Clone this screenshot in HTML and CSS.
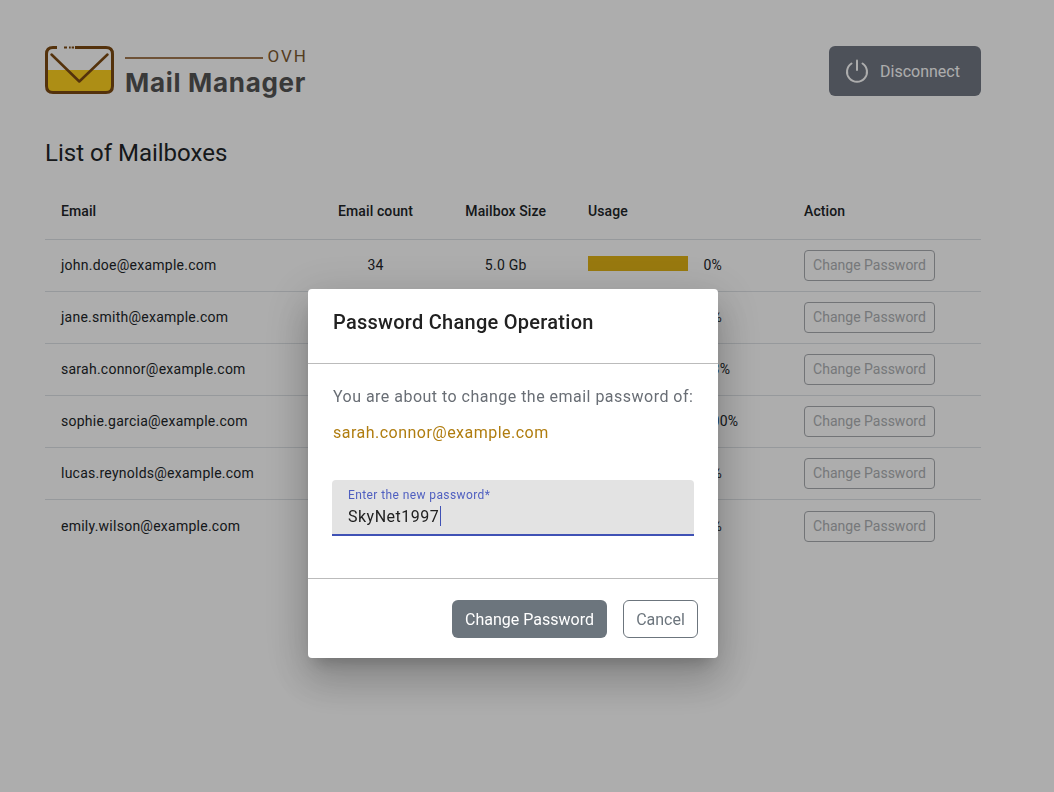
FILE: index.html
```html
<!DOCTYPE html>
<html>
<head>
	<meta charset="utf-8">
	<title>OVH Mail Manager</title>
	<link rel="stylesheet" href="styles.css">
</head>
<body>
<div class="page">
	<header class="topbar">
		<div class="logo">
			<svg class="logo-icon" width="70" height="50" viewBox="0 0 70 50">
				<path d="M2 24H67V41Q67 46 62 46H7Q2 46 2 41Z" fill="#ffd21f"/>
				<path d="M12 1.500H8Q1.500 1.500 1.500 8V40Q1.500 46.500 8 46.500H61Q67.500 46.500 67.500 40V8Q67.500 1.500 61 1.500H30" fill="none" stroke="#7d4a12" stroke-width="3"/>
				<path d="M19 1.500H22M24 1.500H25.700M26.700 1.500H29" fill="none" stroke="#7d4a12" stroke-width="2"/>
				<path d="M6.500 8.500L34.300 35.500L62.500 8.500" fill="none" stroke="#7d4a12" stroke-width="2.500" stroke-linecap="round" stroke-linejoin="round"/>
			</svg>
			<div class="logo-text">
				<div class="logo-top"><span class="logo-line"></span><span class="logo-ovh">OVH</span></div>
				<div class="logo-name">Mail Manager</div>
			</div>
		</div>
		<button class="disconnect">
			<svg width="24" height="24" viewBox="0 0 24 24" fill="none" stroke="#fff" stroke-width="2" stroke-linecap="round">
				<path d="M12 1.500V11"/>
				<path d="M6.500 4.500A10 10 0 1 0 17.500 4.500"/>
			</svg>
			Disconnect
		</button>
	</header>

	<h1 class="heading">List of Mailboxes</h1>

	<div class="mail-table">
		<div class="row head">
			<div class="cell">Email</div>
			<div class="cell mid">Email count</div>
			<div class="cell mid">Mailbox Size</div>
			<div class="cell usage">Usage</div>
			<div class="cell">Action</div>
		</div>
		<div class="row">
			<div class="cell">john.doe@example.com</div>
			<div class="cell mid">34</div>
			<div class="cell mid">5.0 Gb</div>
			<div class="cell usage"><span class="bar"></span><span>0%</span></div>
			<div class="cell"><button class="btn-outline">Change Password</button></div>
		</div>
		<div class="row">
			<div class="cell">jane.smith@example.com</div>
			<div class="cell mid"></div>
			<div class="cell mid"></div>
			<div class="cell usage"><span class="bar"></span><span>5%</span></div>
			<div class="cell"><button class="btn-outline">Change Password</button></div>
		</div>
		<div class="row">
			<div class="cell">sarah.connor@example.com</div>
			<div class="cell mid"></div>
			<div class="cell mid"></div>
			<div class="cell usage"><span class="bar"></span><span>33%</span></div>
			<div class="cell"><button class="btn-outline">Change Password</button></div>
		</div>
		<div class="row">
			<div class="cell">sophie.garcia@example.com</div>
			<div class="cell mid"></div>
			<div class="cell mid"></div>
			<div class="cell usage"><span class="bar"></span><span>100%</span></div>
			<div class="cell"><button class="btn-outline">Change Password</button></div>
		</div>
		<div class="row">
			<div class="cell">lucas.reynolds@example.com</div>
			<div class="cell mid"></div>
			<div class="cell mid"></div>
			<div class="cell usage"><span class="bar"></span><span>5%</span></div>
			<div class="cell"><button class="btn-outline">Change Password</button></div>
		</div>
		<div class="row last">
			<div class="cell">emily.wilson@example.com</div>
			<div class="cell mid"></div>
			<div class="cell mid"></div>
			<div class="cell usage"><span class="bar"></span><span>5%</span></div>
			<div class="cell"><button class="btn-outline">Change Password</button></div>
		</div>
	</div>
</div>

<div class="backdrop">
	<div class="dialog">
		<div class="dialog-title">Password Change Operation</div>
		<div class="dialog-body">
			<p class="dialog-text">You are about to change the email password of:</p>
			<p class="dialog-mail">sarah.connor@example.com</p>
			<div class="field">
				<div class="field-label">Enter the new password*</div>
				<div class="field-value">SkyNet1997<span class="caret"></span></div>
			</div>
		</div>
		<div class="dialog-foot">
			<button class="btn-solid">Change Password</button>
			<button class="btn-cancel">Cancel</button>
		</div>
	</div>
</div>
</body>
</html>
```

FILE: styles.css
```css
* {
	box-sizing: border-box;
}
html, body {
	height: 100%;
}
body {
	margin: 0;
	background: #fff;
	color: #212529;
	font-family: Roboto, sans-serif;
	overflow: hidden;
}
button {
	font-family: Roboto, sans-serif;
}
.page {
	width: 936px;
	margin-left: 45px;
	padding-top: 46px;
}
.topbar {
	display: flex;
	justify-content: space-between;
	align-items: flex-start;
	height: 50px;
}
.logo {
	display: flex;
	gap: 10px;
}
.logo-icon {
	display: block;
}
.logo-text {
	width: 181px;
}
.logo-top {
	display: flex;
	align-items: center;
	gap: 5px;
	height: 20px;
}
.logo-line {
	flex: 1;
	height: 2px;
	background: #a27a52;
	margin-top: 4px;
}
.logo-ovh {
	font-size: 17px;
	font-weight: 400;
	letter-spacing: 2px;
	line-height: 20px;
	margin-right: -2px;
	color: #7d5a30;
}
.logo-name {
	margin-top: 2px;
	font-family: Inter, sans-serif;
	font-size: 26px;
	font-weight: 700;
	letter-spacing: .7px;
	line-height: 30px;
	color: #555;
	white-space: nowrap;
}
.disconnect {
	display: flex;
	align-items: center;
	gap: 11px;
	width: 152px;
	height: 50px;
	padding: 0 16px;
	border: none;
	border-radius: 6px;
	background: #727884;
	color: #fff;
	font-size: 16px;
}
.heading {
	margin: 41px 0 0;
	font-size: 24px;
	font-weight: 400;
	line-height: 32px;
	color: #212529;
}
.mail-table {
	margin-top: 14px;
	font-size: 14px;
	letter-spacing: .25px;
}
.row {
	display: grid;
	grid-template-columns: 271.500px 118px 142.500px 211px 193px;
	align-items: center;
	height: 52.1px;
	border-bottom: 1px solid #dee2e6;
}
.row.head {
	height: 57px;
	font-weight: 500;
	letter-spacing: .1px;
}
.row.last {
	border-bottom: none;
}
.cell {
	padding: 0 16px 2px;
	white-space: nowrap;
}
.cell.mid {
	text-align: center;
	padding: 0 0 2px;
}
.cell.usage {
	padding-left: 11px;
}
.row.head .cell {
	padding-bottom: 0;
}
.usage {
	display: flex;
	align-items: center;
	gap: 15.500px;
}
.bar {
	width: 100px;
	height: 15px;
	margin-top: -3px;
	background: #e2b416;
}
.btn-outline {
	display: block;
	width: 131px;
	height: 31px;
	margin-bottom: -2px;
	padding: 0 0 2px;
	border: 1px solid #a8acb0;
	border-radius: 4px;
	background: transparent;
	color: #aeb1b4;
	font-size: 14px;
}
.backdrop {
	position: fixed;
	inset: 0;
	background: rgba(0, 0, 0, .32);
	padding: 289px 0 0 308px;
}
.dialog {
	width: 410px;
	height: 369px;
	display: flex;
	flex-direction: column;
	border-radius: 4px;
	background: #fff;
	box-shadow: 0 11px 15px -7px rgba(0, 0, 0, .2), 0 24px 38px 3px rgba(0, 0, 0, .14), 0 9px 46px 8px rgba(0, 0, 0, .12);
}
.dialog-title {
	height: 75px;
	padding: 21px 25px 0;
	border-bottom: 1px solid #bbb;
	font-size: 20px;
	font-weight: 500;
	line-height: 24px;
	letter-spacing: .27px;
	color: #212121;
}
.dialog-body {
	flex: 1;
	padding: 21px 24px 0;
}
.dialog-text {
	margin: 0 0 0 1px;
	font-size: 16px;
	line-height: 24px;
	letter-spacing: .48px;
	color: #696e75;
	white-space: nowrap;
}
.dialog-mail {
	margin: 12px 0 0 1px;
	font-size: 16px;
	line-height: 24px;
	letter-spacing: .48px;
	color: #b07d10;
}
.field {
	width: 362px;
	height: 56px;
	margin-top: 35px;
	padding: 8px 16px 0;
	border-bottom: 2px solid #3f51b5;
	border-radius: 4px 4px 0 0;
	background: #e3e3e3;
}
.field-label {
	font-size: 12px;
	line-height: 15px;
	letter-spacing: .4px;
	color: #4f5fc0;
}
.field-value {
	display: flex;
	align-items: center;
	height: 22px;
	margin-top: 2px;
	font-size: 16px;
	letter-spacing: .5px;
	color: #212121;
}
.caret {
	width: 1px;
	height: 20px;
	margin-left: 1px;
	background: #3f51b5;
}
.dialog-foot {
	display: flex;
	justify-content: flex-end;
	gap: 16px;
	height: 80px;
	padding: 21px 20px 0;
	border-top: 1px solid #bbb;
}
.btn-solid, .btn-cancel {
	height: 38px;
	padding: 0;
	border-radius: 6px;
	font-size: 16px;
}
.btn-solid {
	width: 155px;
	border: none;
	background: #6c757d;
	color: #fff;
}
.btn-cancel {
	width: 75px;
	border: 1px solid #6c757d;
	background: #fff;
	color: #6c757d;
}
```
